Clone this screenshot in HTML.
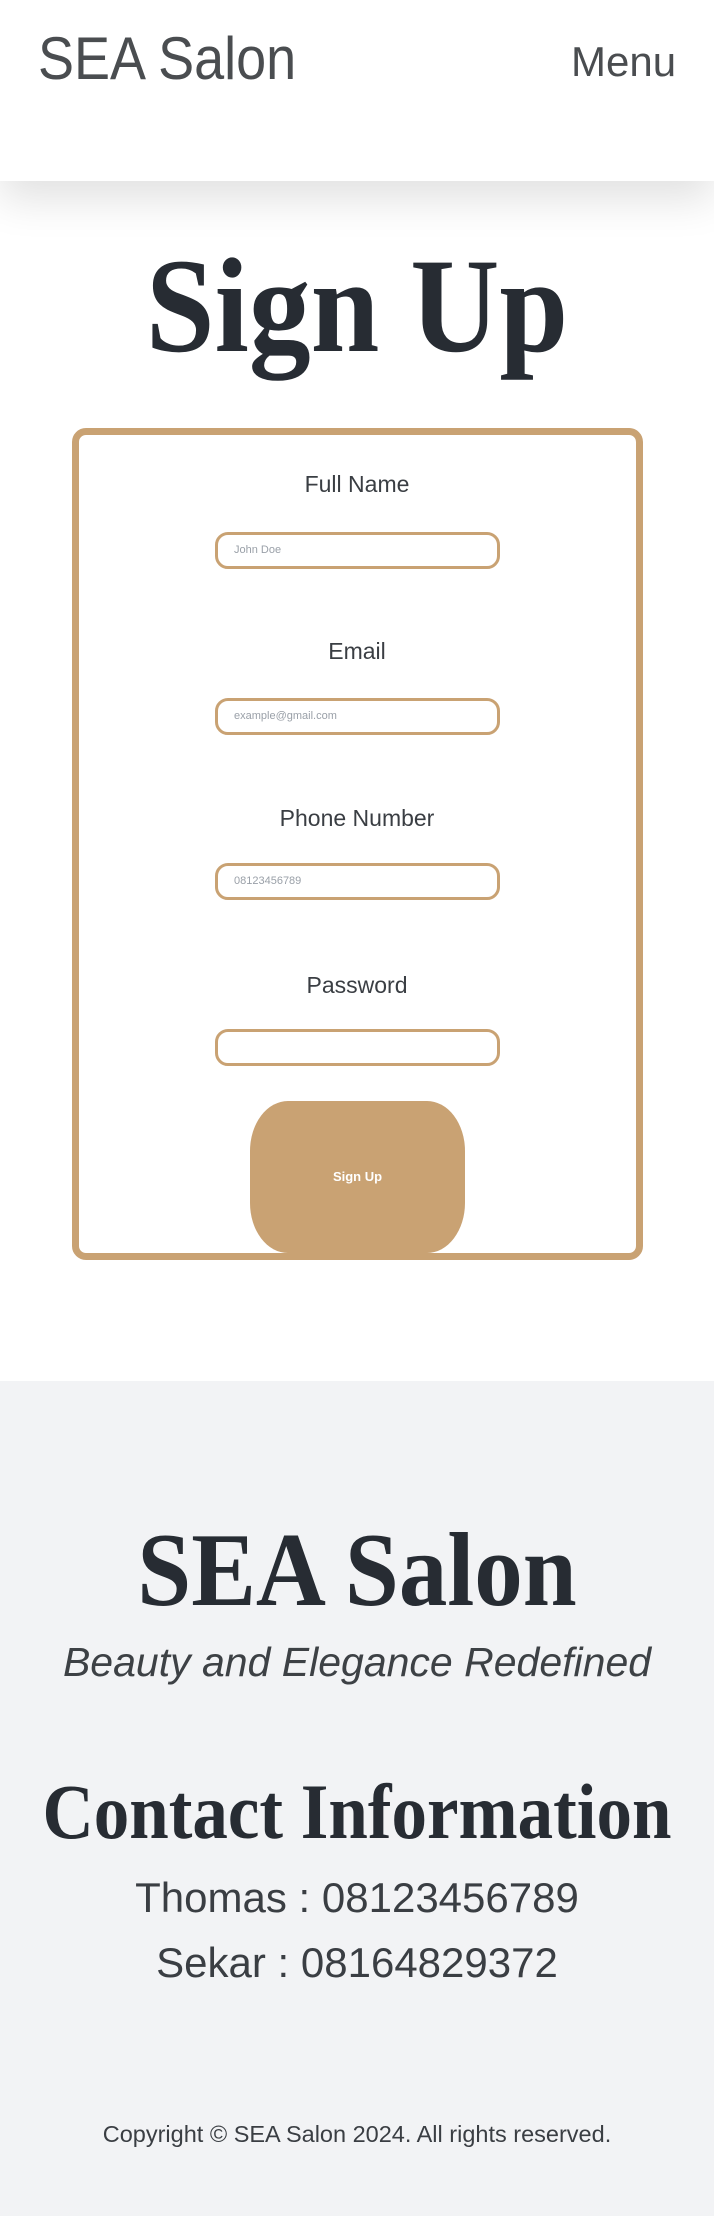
<!DOCTYPE html>
<html><head><meta charset="utf-8"><style>
*{margin:0;padding:0;box-sizing:border-box}
body{width:714px;height:2216px;background:#fff;font-family:"Liberation Sans",sans-serif;color:#2a2f35;position:relative;overflow:hidden}
.abs{position:absolute;white-space:nowrap}
header{position:absolute;left:0;top:0;width:714px;height:181px;background:#fff;box-shadow:0 18px 40px rgba(0,0,0,0.12);z-index:2}
.c{left:0;width:714px;text-align:center}
.serif{font-family:"Liberation Serif",serif;font-weight:bold;color:#272c33}
.box{position:absolute;left:72px;top:428px;width:571px;height:832px;border:7px solid #c9a273;border-radius:14px}
.lbl{font-size:23px;color:#3a3e43}
.inp{position:absolute;left:215px;width:285px;height:37px;border:3px solid #c9a273;border-radius:13px;font-size:11px;color:#9aa0a8;padding-left:16px;line-height:31px}
.btn{position:absolute;left:250px;top:1101px;width:215px;height:152px;background:#c9a273;border-radius:38px/50px;color:#fff;font-weight:bold;font-size:13px;text-align:center;line-height:152px}
.foot{position:absolute;left:0;top:1381px;width:714px;height:835px;background:#f2f3f5}
</style></head><body>
<header>
<div class="abs" style="left:38px;top:24px;font-size:60px;color:#4a4d50;transform:scaleX(0.9);transform-origin:left">SEA Salon</div>
<div class="abs" style="left:571px;top:38px;font-size:42px;color:#4a4d50">Menu</div>
</header>
<div class="abs c serif" style="top:232px;font-size:135px;line-height:150px;transform:scaleX(0.915)">Sign Up</div>
<div class="box"></div>
<div class="abs c lbl" style="top:471px">Full Name</div>
<div class="inp" style="top:532px">John Doe</div>
<div class="abs c lbl" style="top:638px">Email</div>
<div class="inp" style="top:698px">example@gmail.com</div>
<div class="abs c lbl" style="top:805px">Phone Number</div>
<div class="inp" style="top:863px">08123456789</div>
<div class="abs c lbl" style="top:972px">Password</div>
<div class="inp" style="top:1029px"></div>
<div class="btn">Sign Up</div>
<div class="foot"></div>
<div class="abs c serif" style="top:1510px;font-size:105px;line-height:120px;transform:scaleX(0.924)">SEA Salon</div>
<div class="abs c" style="top:1639px;font-size:41px;font-style:italic;color:#3d4145">Beauty and Elegance Redefined</div>
<div class="abs c serif" style="top:1767px;font-size:78px;line-height:90px;transform:scaleX(0.91)">Contact Information</div>
<div class="abs c" style="top:1874px;font-size:42px;color:#3a3e43">Thomas : 08123456789</div>
<div class="abs c" style="top:1939px;font-size:42px;color:#3a3e43">Sekar : 08164829372</div>
<div class="abs c" style="top:2121px;font-size:23.5px;color:#3a3e43">Copyright © SEA Salon 2024. All rights reserved.</div>
</body></html>
